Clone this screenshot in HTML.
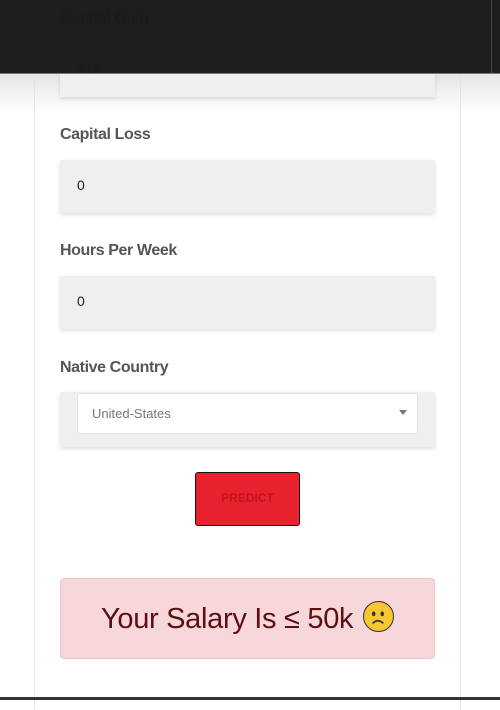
<!DOCTYPE html>
<html><head><style>
*{margin:0;padding:0;box-sizing:border-box}
body{width:500px;height:700px;overflow:hidden;background:#fff;position:relative;font-family:"Liberation Sans",sans-serif}
.grad{position:absolute;left:0;top:74px;width:500px;height:40px;background:linear-gradient(#e6e6e6,#fff)}
.card{position:absolute;left:34px;top:-10px;width:427px;height:720px;border-left:1px solid #e4e4e4;border-right:1px solid #e4e4e4}
.lbl{position:absolute;left:60px;font-weight:bold;font-size:16px;color:#555;letter-spacing:-0.4px}
.inp{position:absolute;left:60px;width:375px;height:53px;background:#efefef;box-shadow:0 2px 4px rgba(0,0,0,0.12);font-size:14px;color:#222;padding:17px 0 0 17px}
.sel{position:absolute;left:77px;top:393px;width:341px;height:41px;background:#fff;border:1px solid #e2e2e2;border-radius:3px;font-size:13px;color:#777;padding:12px 0 0 14px}
.arr{position:absolute;right:10px;top:16px;border-left:4px solid transparent;border-right:4px solid transparent;border-top:5px solid #777}
.btn{position:absolute;left:195px;top:472px;width:105px;height:54px;background:#e8222e;border:1.5px solid #111;border-radius:3px;color:#c01520;font-weight:bold;font-size:12px;text-align:center;line-height:51px}
.alert{position:absolute;left:60px;top:578px;width:375px;height:81px;background:#f8d7da;border:1px solid #f3c3c8;border-radius:4px;color:#5c0f12;font-size:29px;text-align:center;line-height:80px;letter-spacing:-0.3px}
.emo{display:inline-block;width:31px;height:31px;border-radius:50%;background:#f6c633;border:1.5px solid #333;vertical-align:-4px;position:relative;margin-left:2px}
.top{position:absolute;left:0;top:0;width:500px;height:74px;background:rgba(26,26,26,0.985);border-bottom:1px solid #777}
.rl{position:absolute;left:491px;top:0;width:1px;height:73px;background:#444}
.bot{position:absolute;left:0;top:697px;width:500px;height:3px;background:#333}
</style></head><body>
<div class="grad"></div>
<div class="card"></div>
<div class="lbl" style="top:10px">Capital Gain</div>
<div class="inp" style="top:44px">215</div>
<div class="lbl" style="top:126px">Capital Loss</div>
<div class="inp" style="top:160px">0</div>
<div class="lbl" style="top:242px">Hours Per Week</div>
<div class="inp" style="top:276px">0</div>
<div class="lbl" style="top:359px">Native Country</div>
<div class="inp" style="top:392px;height:55px;padding:0"></div>
<div class="sel">United-States<div class="arr"></div></div>
<div class="btn">PREDICT</div>
<div class="alert">Your Salary Is ≤ 50k <span class="emo"><svg width="31" height="31" viewBox="0 0 29 29" style="position:absolute;left:-1.5px;top:-1.5px"><ellipse cx="10" cy="12" rx="1.6" ry="2.2" fill="#333"/><ellipse cx="18" cy="12" rx="1.6" ry="2.2" fill="#333"/><path d="M9 21 Q14 16 19 21" stroke="#333" stroke-width="1.6" fill="none"/></svg></span></div>
<div class="top"></div>
<div class="rl"></div>
<div class="bot"></div>
</body></html>
